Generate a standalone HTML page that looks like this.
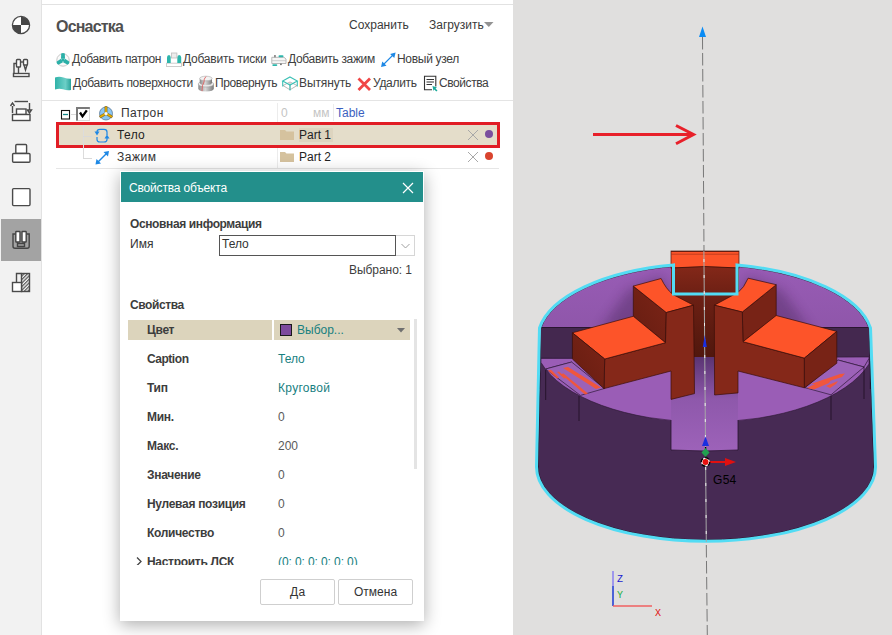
<!DOCTYPE html>
<html><head><meta charset="utf-8">
<style>
html,body{margin:0;padding:0;width:892px;height:635px;overflow:hidden;background:#fff;}
body{position:relative;font-family:"Liberation Sans",sans-serif;color:#333;}
.a{position:absolute;white-space:nowrap;}
.t12{font-size:12px;line-height:14px;}
.t13{font-size:13px;line-height:15px;}
.b{font-weight:bold;}
#side{position:absolute;left:0;top:0;width:41px;height:635px;background:#f2f2f2;border-right:1px solid #e2e2e2;}
#view{position:absolute;left:513px;top:0;width:379px;height:635px;background:#e0dfde;overflow:hidden;}
svg{position:absolute;overflow:visible;}
.tb{color:#404040;}
.lbl{color:#3d3d3d;font-weight:bold;font-size:12px;line-height:14px;position:absolute;white-space:nowrap;}
.val{color:#5a5a5a;font-size:12px;line-height:14px;position:absolute;white-space:nowrap;}
.teal{color:#17807f;}
</style></head><body>

<!-- ===== sidebar ===== -->
<div id="side"></div>
<div class="a" style="left:1px;top:219px;width:40px;height:42px;background:#a3a3a3"></div>
<!-- icon 1 : circle target -->
<svg style="left:0;top:0" width="42" height="300">
 <circle cx="21" cy="25" r="8.6" fill="#fff" stroke="#4a4a4a" stroke-width="1.3"/>
 <path d="M21 25 L21 16.4 A8.6 8.6 0 0 1 29.6 25 Z" fill="#474747"/>
 <path d="M21 25 L21 33.6 A8.6 8.6 0 0 1 12.4 25 Z" fill="#474747"/>
 <!-- icon 2 : machine -->
 <g fill="none" stroke="#4a4a4a" stroke-width="1.4">
  <rect x="13.5" y="73.5" width="15.5" height="3" fill="#fff"/>
  <path d="M14 73.5 V63.5 H16.5"/>
  <path d="M18.5 73.5 V67"/>
  <rect x="16.5" y="59.5" width="4" height="7.5" rx="0.8" fill="#fff"/>
  <rect x="23.5" y="59.5" width="4" height="5.5" rx="0.8" fill="#fff"/>
  <path d="M24 65 L25.5 70 L27 65"/>
  <path d="M20.5 62 H23.5"/>
 </g>
 <!-- icon 3 : arrows/table -->
 <g fill="none" stroke="#4a4a4a" stroke-width="1.4">
  <path d="M14.5 101.5 H28"/>
  <path d="M12.5 113 V104"/><path d="M10.5 106 L12.5 103 L14.5 106" fill="#fff"/>
  <path d="M29.5 103 V111"/><path d="M27.5 110 L29.5 113 L31.5 110 Z" fill="#fff"/>
  <rect x="16.5" y="109" width="9.5" height="5.5" fill="#fff"/>
  <rect x="12.5" y="114.5" width="17.5" height="6" fill="#fff"/>
 </g>
 <!-- icon 4 : stacked boxes -->
 <g fill="#fff" stroke="#4a4a4a" stroke-width="1.4">
  <rect x="15.8" y="144.5" width="10.8" height="9" rx="1"/>
  <rect x="12.6" y="153.5" width="17.4" height="8.8" rx="1"/>
  <rect x="12.6" y="188.6" width="17.4" height="17" rx="1"/>
 </g>
 <!-- icon 5 : vise (selected) -->
 <g fill="none" stroke="#444" stroke-width="1.4">
  <path d="M15.8 234 H13 V246.3 Q13 248.3 15 248.3 H27.2 Q29.2 248.3 29.2 246.3 V234 H26.2"/>
  <rect x="15.8" y="231.5" width="4.2" height="10.5" rx="0.5" fill="#fff"/>
  <rect x="22" y="231.5" width="4.2" height="10.5" rx="0.5" fill="#fff"/>
  <path d="M17.5 242 V247 M24.5 242 V247 M17.5 243.5 H24.5 M17.5 246.5 H24.5"/>
 </g>
 <!-- icon 6 : hatched -->
 <defs><pattern id="hat" width="2.5" height="2.5" patternUnits="userSpaceOnUse" patternTransform="rotate(45)"><rect width="1.2" height="2.5" fill="#555"/></pattern></defs>
 <g stroke="#4a4a4a" stroke-width="1.4">
  <rect x="21.5" y="273.5" width="8" height="18" fill="url(#hat)"/>
  <path d="M16.5 282.5 V273.5 H21.5" fill="none"/>
  <rect x="12.5" y="282.5" width="9" height="9" fill="#fff"/>
 </g>
</svg>

<!-- ===== main panel ===== -->
<div class="a" style="left:42px;top:4px;width:471px;height:1px;background:#e2e2e2"></div>
<div class="a b" style="left:56px;top:18px;font-size:16px;line-height:18px;color:#505050;letter-spacing:-0.8px">Оснастка</div>
<div class="a t12" style="left:349px;top:18px;color:#3a3a3a;letter-spacing:0px">Сохранить</div>
<div class="a t12" style="left:429px;top:18px;color:#3a3a3a;letter-spacing:0px">Загрузить</div>
<svg style="left:0;top:0" width="1" height="1"><path d="M484 22 H493.5 L488.8 27 Z" fill="#939393"/></svg>

<!-- toolbar row 1 -->
<div class="a t12 tb" style="left:72px;top:52px;letter-spacing:-0.38px">Добавить патрон</div>
<div class="a t12 tb" style="left:183px;top:52px;letter-spacing:-0.22px">Добавить тиски</div>
<div class="a t12 tb" style="left:288px;top:52px;letter-spacing:-0.33px">Добавить зажим</div>
<div class="a t12 tb" style="left:397px;top:52px;letter-spacing:-0.3px">Новый узел</div>
<!-- toolbar row 2 -->
<div class="a t12 tb" style="left:73px;top:76px;letter-spacing:-0.33px">Добавить поверхности</div>
<div class="a t12 tb" style="left:215px;top:76px;letter-spacing:-0.38px">Провернуть</div>
<div class="a t12 tb" style="left:299px;top:76px;letter-spacing:-0.1px">Вытянуть</div>
<div class="a t12 tb" style="left:373px;top:76px;letter-spacing:-0.3px">Удалить</div>
<div class="a t12 tb" style="left:439px;top:76px;letter-spacing:-0.43px">Свойства</div>

<svg style="left:0;top:0" width="1" height="1">
 <!-- chuck icon -->
 <g transform="translate(63,60)">
  <circle r="6.2" fill="#fafafa" stroke="#c8c8c8" stroke-width="1"/>
  <path d="M-2 -1.2 L-1.8 -6.5 Q0 -7.5 1.8 -6.5 L2 -1.2 Z" fill="#2bb0a8"/>
  <g transform="rotate(120)"><path d="M-2 -1.2 L-1.8 -6.5 Q0 -7.5 1.8 -6.5 L2 -1.2 Z" fill="#2bb0a8"/></g>
  <g transform="rotate(240)"><path d="M-2 -1.2 L-1.8 -6.5 Q0 -7.5 1.8 -6.5 L2 -1.2 Z" fill="#2bb0a8"/></g>
  <circle r="1.6" fill="#2bb0a8"/>
 </g>
 <!-- vise icon -->
 <g>
  <rect x="166.5" y="63.2" width="15" height="3.3" fill="#fff" stroke="#c8c8c8" stroke-width="0.9"/>
  <path d="M167 63 V57.5 Q167 55 169 55 Q170.7 55 170.7 57.5 V63 Z" fill="#2db5ab"/>
  <path d="M177.3 63 V57.5 Q177.3 55 179.2 55 Q181.2 55 181.2 57.5 V63 Z" fill="#2db5ab"/>
  <rect x="171.4" y="53" width="5.5" height="5" fill="#ececec" stroke="#bdbdbd" stroke-width="0.8"/>
 </g>
 <!-- clamp icon -->
 <g>
  <path d="M271.8 57.3 H284 L286 59 V63.5 H271.8 Z" fill="#f6f6f6" stroke="#b0b0b0" stroke-width="0.9"/>
  <path d="M272 60.7 H286" stroke="#c0c0c0" stroke-width="0.8"/>
  <rect x="274.2" y="55" width="1.5" height="2.3" fill="#777"/>
  <rect x="278.5" y="55.2" width="5" height="2" rx="1" fill="#2db5ab"/>
  <rect x="272.3" y="64.2" width="5" height="1.8" rx="0.9" fill="#2db5ab"/>
  <rect x="280" y="63.5" width="1.8" height="1.6" fill="#777"/>
 </g>
 <!-- new node arrow -->
 <g stroke="#1e88e5" stroke-width="1.1" fill="#1e88e5">
  <path d="M383.5 64.5 L393 55" />
  <path d="M381 67 L382.3 61.5 L386.5 65.7 Z" stroke="none"/>
  <path d="M395.6 52.6 L394.3 58.1 L390.1 53.9 Z" stroke="none"/>
 </g>
 <!-- surface flag -->
 <defs><linearGradient id="gflag" x1="0" x2="1" y1="0" y2="0"><stop offset="0" stop-color="#2fb2a8"/><stop offset="0.65" stop-color="#6ccfc7"/><stop offset="1" stop-color="#2aa39a"/></linearGradient></defs>
 <path d="M55 77.5 Q59 76 63.5 77.5 Q67.5 79 71 78.8 V90 Q67 90.8 63 89.2 Q59 88 55 89.5 Z" fill="url(#gflag)"/>
 <!-- revolve icon -->
 <defs><linearGradient id="gcyl" x1="0" x2="1" y1="0" y2="0"><stop offset="0" stop-color="#8a8a8a"/><stop offset="0.45" stop-color="#d8d8d8"/><stop offset="1" stop-color="#7a7a7a"/></linearGradient></defs>
 <g>
  <path d="M198.3 84 V88.5 Q198.3 91.5 206 91.5 Q213.8 91.5 213.8 88.5 V84 Z" fill="url(#gcyl)"/>
  <ellipse cx="206" cy="84" rx="7.8" ry="3" fill="#e8e8e8" stroke="#999" stroke-width="0.5"/>
  <path d="M199.7 78.5 V82.5 Q199.7 85 206 85 Q212 85 212 82.5 V78.5 Z" fill="url(#gcyl)"/>
  <ellipse cx="205.9" cy="78.5" rx="6.2" ry="2.3" fill="#f2f2f2" stroke="#999" stroke-width="0.5"/>
  <path d="M206 76.5 Q203.5 79 204 82 Q201.8 85 202 91.2" fill="none" stroke="#e05050" stroke-width="0.8"/>
 </g>
 <!-- extrude icon -->
 <g fill="none" stroke="#9a9a9a" stroke-width="0.7">
  <path d="M283 85.5 L290 89.8 L297 85.5 M290 83 V89.8 M283 85.5 L290 82 L297 85.5"/>
 </g>
 <g fill="none" stroke="#3cc0b5" stroke-width="1.1">
  <path d="M290 77 L297.3 81 L290 85 L282.7 81 Z"/>
  <path d="M282.7 81 V86.5 M297.3 81 V86.5 M290 85 V90.5"/>
 </g>
 <!-- delete X -->
 <g stroke="#f04646" stroke-width="2.8">
  <path d="M358.5 78.5 L370 90 M370 78.5 L358.5 90"/>
 </g>
 <!-- properties doc -->
 <g fill="none" stroke="#333" stroke-width="1.1">
  <path d="M432 89.7 H424.5 V76.3 H435.8 V86.5"/>
  <path d="M426.5 79.5 H434 M426.5 82 H434 M426.5 84.5 H432"/>
 </g>
 <path d="M432.5 86 L437 87.5 L435.5 88.5 L437.5 90.5 L436.3 91.5 L434.3 89.5 L433.5 91 Z" fill="#1aaa9a"/>
</svg>

<!-- ===== tree ===== -->
<div class="a" style="left:42px;top:100px;width:471px;height:1px;background:#e4e4e4"></div>
<div class="a" style="left:56px;top:168px;width:443px;height:1px;background:#e6e6e6"></div>
<!-- column separators -->
<div class="a" style="left:277px;top:103px;width:1px;height:65px;background:#ececec"></div>
<div class="a" style="left:333px;top:104px;width:1px;height:17px;background:#ececec"></div>
<!-- selected row -->
<div class="a" style="left:56px;top:122px;width:438px;height:20px;border:3px solid #e11d25;background:#e4ddca"></div>
<div class="a" style="left:299px;top:128px;width:34px;height:14px;background:#ddd4bf"></div>
<!-- tree lines -->
<div class="a" style="left:83px;top:125px;width:1px;height:33px;background:#dcdcdc"></div>
<div class="a" style="left:83px;top:136px;width:9px;height:1px;background:#d9d9d9"></div>
<div class="a" style="left:83px;top:158px;width:9px;height:1px;background:#d9d9d9"></div>
<div class="a" style="left:71px;top:114px;width:5px;height:1px;background:#d9d9d9"></div>

<div class="a t12" style="left:121px;top:106px;color:#333;letter-spacing:0.35px">Патрон</div>
<div class="a t12" style="left:117px;top:128px;color:#222;letter-spacing:0.35px">Тело</div>
<div class="a t12" style="left:117px;top:150px;color:#333;letter-spacing:0.55px">Зажим</div>
<div class="a t12" style="left:281px;top:106px;color:#c4c4c4">0</div>
<div class="a t12" style="left:313px;top:106px;color:#c4c4c4">мм</div>
<div class="a t12" style="left:336px;top:106px;color:#3b5fc0">Table</div>
<div class="a t12" style="left:299px;top:128px;color:#222;letter-spacing:0px">Part 1</div>
<div class="a t12" style="left:299px;top:150px;color:#222;letter-spacing:0px">Part 2</div>

<svg style="left:0;top:0" width="1" height="1">
 <!-- minus box -->
 <rect x="61.5" y="110.5" width="8" height="8.5" fill="#fff" stroke="#111" stroke-width="1.1"/>
 <path d="M63 114.5 H68" stroke="#15888a" stroke-width="1.3"/>
 <!-- checkbox -->
 <rect x="76.5" y="107.5" width="13" height="13" fill="#fff" stroke="#dadada" stroke-width="1"/>
 <path d="M76 108 H89.8 M77 107 V120.6" stroke="#7a7a7a" stroke-width="2"/>
 <path d="M80 112.5 L82.5 116.3 L86.8 110.3" fill="none" stroke="#000" stroke-width="2.3"/>
 <!-- patron icon -->
 <g transform="translate(106,113.5)">
  <circle r="6.5" fill="#8cc6f2" stroke="#4a6a8a" stroke-width="0.7"/>
  <g fill="#f0b400" stroke="#6a5010" stroke-width="0.5">
  <path d="M-1.1 -1 L-1.1 -7 L1.1 -7 L1.1 -1 Z"/>
  <g transform="rotate(120)"><path d="M-1.1 -1 L-1.1 -7 L1.1 -7 L1.1 -1 Z"/></g>
  <g transform="rotate(240)"><path d="M-1.1 -1 L-1.1 -7 L1.1 -7 L1.1 -1 Z"/></g>
  </g>
  <circle r="1.6" fill="#fff"/>
 </g>
 <!-- body icon (rotate arrows) -->
 <g fill="none" stroke="#1e88e5" stroke-width="1.2">
  <path d="M97 134 V132 Q97 129.3 100 129.3 H104 Q107 129.3 107 132 V135"/>
  <path d="M107 137 V139.5 Q107 142 104 142 H100 Q97 142 97 139.5 V137"/>
 </g>
 <path d="M94.5 131.5 H99.5 L97 135.5 Z" fill="#1e88e5"/>
 <path d="M104.5 138.5 H109.5 L107 134.5 Z" fill="#1e88e5"/>
 <!-- clamp arrow icon -->
 <g stroke="#1e88e5" stroke-width="1.5" fill="#1e88e5">
  <path d="M97.5 162.5 L107 153"/>
  <path d="M95.5 164.5 L96.5 159 L101 163.5 Z" stroke="none"/>
  <path d="M109 151 L108 156.5 L103.5 152 Z" stroke="none"/>
 </g>
 <!-- folders -->
 <g fill="#d5c29e">
  <path d="M280 130 H285 L286.5 131.5 H294 V140 H280 Z"/>
  <path d="M280 152 H285 L286.5 153.5 H294 V162 H280 Z"/>
 </g>
 <!-- X marks -->
 <g stroke="#a8a8a8" stroke-width="1">
  <path d="M468 130 L478 140 M478 130 L468 140"/>
  <path d="M468 152 L478 162 M478 152 L468 162"/>
 </g>
 <circle cx="489" cy="134" r="4" fill="#7b4f9e"/>
 <circle cx="489" cy="156" r="4" fill="#d9442e"/>
</svg>

<!-- ===== viewport ===== -->
<div id="view"></div>
<svg style="left:0;top:0" width="892" height="635" viewBox="0 0 892 635">
 <defs>
  <clipPath id="vclip"><rect x="513" y="0" width="379" height="635"/></clipPath>
  <clipPath id="upclip"><path d="M541 328 A166 74.5 0 0 1 869 328 Z"/></clipPath>
  <filter id="blur4" x="-50%" y="-50%" width="200%" height="200%"><feGaussianBlur stdDeviation="6"/></filter>
  <linearGradient id="gup" x1="0" x2="0" y1="0" y2="1">
   <stop offset="0" stop-color="#985cb5"/><stop offset="1" stop-color="#8f56aa"/>
  </linearGradient>
  <linearGradient id="gslot" x1="0" x2="0" y1="0" y2="1">
   <stop offset="0" stop-color="#5a3472"/><stop offset="0.45" stop-color="#8e58ab"/><stop offset="1" stop-color="#9d62b9"/>
  </linearGradient>
  <linearGradient id="gbj" gradientUnits="userSpaceOnUse" x1="0" x2="0" y1="266" y2="357"><stop offset="0" stop-color="#842819"/><stop offset="0.3" stop-color="#6e2014"/><stop offset="1" stop-color="#50170d"/></linearGradient>
  <linearGradient id="gback" x1="0" x2="0" y1="0" y2="1"><stop offset="0" stop-color="#842819"/><stop offset="1" stop-color="#5e1c10"/></linearGradient>
  <linearGradient id="gside" x1="0" x2="1" y1="1" y2="0">
   <stop offset="0" stop-color="#661d11"/><stop offset="1" stop-color="#7c2417"/>
  </linearGradient>
 </defs>
 <g clip-path="url(#vclip)">
 <!-- dashed axis (top) -->
 <path d="M702.5 37 L704 251" stroke="#787878" stroke-width="1" stroke-dasharray="12.5 3.5"/>
 <path d="M699 37 L702.5 26.5 L706 37 Z" fill="#0a8cf5"/>
 <!-- body silhouette -->
 <path d="M541 328 L538 467 A168 73 0 0 0 874 467 L869 328 Z" fill="#472a54" stroke="#1c0c20" stroke-width="1"/>
 <!-- upper face -->
 <path d="M541 328 A166 74.5 0 0 1 869 328 Z" fill="url(#gup)" stroke="#2a1530" stroke-width="0.8"/>
 <g clip-path="url(#upclip)" filter="url(#blur4)" fill="#3a1a48" opacity="0.35">
  <path d="M628 290 L662 276 L672 300 L668 330 L600 330 Z"/>
  <path d="M782 290 L748 276 L738 300 L742 330 L810 330 Z"/>
 </g>
 <!-- walls -->
 <path d="M541 327.5 H869 V357 H541 Z" fill="#44284f"/>
 <path d="M541 327.5 H869" stroke="#2a1530" stroke-width="1"/>
 <!-- floor -->
 <path d="M541 358 L869 357 L869 364 A170.6 81.3 0 0 1 541 362.5 Z" fill="#9a5db6" stroke="#2a1530" stroke-width="0.6"/>
 <!-- floor band lines + streak faces -->
 <path d="M541 358.5 L572 358.5 M545.7 369 L572 362 M838 360 L864 367 L869 358.5" fill="none" stroke="#3a2045" stroke-width="0.8"/>
 <path d="M545.7 369 L571.6 362 L604.3 388.5 L580.4 395.4 Z" fill="#9c62b8" stroke="#2e1838" stroke-width="0.7"/>
 <path d="M838 360 L864 367 L831 394.8 L805 387.7 Z" fill="#9c62b8" stroke="#2e1838" stroke-width="0.7"/>
 <g fill="#ff5528" opacity="0.85">
  <path d="M548 370.5 L551 369.8 L559 377.5 L557 378.5 Z"/>
  <path d="M563 368 L568 367 L601 387.5 L596 389 Z"/>
  <path d="M561 374 L563.5 373.5 L588 393.5 L585 394.5 Z"/>
  <path d="M557 372 L559 371.5 L566 378 L564 378.5 Z"/>
  <path d="M807 388 L823 380 L832 378 L829 383 L814 389.5 Z"/>
  <path d="M811 384 L840 374 L845 373.5 L842 377 L820 384 Z"/>
  <path d="M826 386 L838 381 L836 384 L830 388 Z"/>
 </g>
 <!-- slot floor -->
 <path d="M671 357 H738 V450 Q705 452 671 450 Z" fill="url(#gslot)"/>
 <path d="M671 420 V450 Q705 452 738 450 V420" fill="none" stroke="#2a1530" stroke-width="0.8"/>
 <!-- facet lines on body -->
 <path d="M539.5 363 V389 M545.7 370 V400 M579 396 V421 M831 396 V420 M864 367 V399 M870.3 361 V389" stroke="#1e0e22" stroke-width="0.8"/>
 <!-- back jaw -->
 <rect x="671" y="251" width="68" height="17" fill="#fd5429" stroke="#4a140c" stroke-width="0.7"/>
 <path d="M671 251.5 H739" stroke="#5a1a10" stroke-width="0.9"/><path d="M671 254.2 H739" stroke="#a8331a" stroke-width="0.7"/>
 <path d="M671 268 Q705 265 739 268 V357 H671 Z" fill="url(#gbj)"/>
 <path d="M671 268 Q705 265 739 268" fill="none" stroke="#3a0e08" stroke-width="0.8"/>
 
 <!-- left jaw -->
 <g stroke="#3a0e08" stroke-width="0.7" stroke-linejoin="round">
 <path d="M633.3 286.1 L666.3 312.5 L665.5 342.7 L633.3 316.3 Z" fill="url(#gside)"/>
 <path d="M633.3 286.1 L661.1 278.5 Q666 289 673 294.6 L693.5 305.2 L666.3 312.5 Z" fill="#fd5429"/>
 <path d="M604.7 359 L665.5 342.7 L666.3 312.5 L693.5 305.2 L694.5 393.6 L671 399.4 L671 371 L604 388.6 Z" fill="#852819"/>
 <path d="M572.4 332.8 L633.3 316.3 L665.5 342.7 L604.7 359 Z" fill="#fd5429"/>
 <path d="M572.4 332.8 L604.7 359 L604 388.6 L572.4 359 Z" fill="url(#gside)"/>
 </g>
 <!-- right jaw -->
 <g stroke="#3a0e08" stroke-width="0.7" stroke-linejoin="round">
 <path d="M776.2 284.7 L742.3 312 L743 341.7 L776.2 316 Z" fill="#782316"/>
 <path d="M776.2 284.7 L748.1 278.2 Q744 288 737.9 292.5 L714.3 305.2 L742.3 312 Z" fill="#fd5429"/>
 <path d="M804.4 358.1 L743 341.7 L742.3 312 L714.3 305.2 L714.6 395 L738 392.9 L738 371 L804.4 387.8 Z" fill="#852819"/>
 <path d="M836.8 331.4 L776.2 315.5 L743 341.7 L804.4 358.1 Z" fill="#fd5429"/>
 <path d="M836.8 331.4 L804.4 358.1 L804.4 387.8 L836.8 363.2 Z" fill="#782316"/>
 </g>
 <!-- cyan outline -->
 <path d="M539.5 328 A167.5 76 0 0 1 673.5 265 V294 H737 V265 A167.5 76 0 0 1 870.5 328 L875.5 467 A169.5 74.3 0 0 1 536.5 467 Z" fill="none" stroke="#52dcf4" stroke-width="3"/>
 <!-- axis through body -->
 <path d="M703.9 251 L706.3 542" stroke="#a8a8a8" stroke-width="1"/>
 <path d="M703.9 251 L706.3 542" stroke="#f0f0f0" stroke-width="1" stroke-dasharray="3 13" stroke-dashoffset="-8"/>
 <path d="M706.3 545 L707.3 635" stroke="#787878" stroke-width="1" stroke-dasharray="12.5 3.5"/>
 <!-- triad -->
 <path d="M702.8 347 L704.8 335 L706.8 347 Z" fill="#1a2ee0"/>
 <path d="M705.6 447 V462" stroke="#000" stroke-width="1.3"/>
 <path d="M702 446 L705.5 436.5 L709 446 Z" fill="#1a2ee0"/>
 <path d="M705.5 448 L709.5 452.5 L705.5 457 L701.5 452.5 Z" fill="#22a050"/>
 <path d="M706 462 H727" stroke="#e01010" stroke-width="2"/>
 <path d="M725 458 L736 462 L725 466 Z" fill="#e01010"/>
 <circle cx="705.5" cy="462" r="4.3" fill="#fff" stroke="#000" stroke-width="1.4" stroke-dasharray="4 2.5"/>
 <circle cx="705.5" cy="462" r="3" fill="#e81010"/>
 </g>
 <!-- red annotation arrow -->
 <path d="M593 134.5 H692" stroke="#e8202a" stroke-width="3.2"/><path d="M676 125.5 L693.5 134.5 L676 143.8" fill="none" stroke="#e8202a" stroke-width="3"/>
 <!-- bottom-left triad -->
 <path d="M613 571 V606" stroke="#8a7ff0" stroke-width="1.5"/>
 <path d="M613 586 V606" stroke="#3050d0" stroke-width="1.5"/>
 <path d="M613 606 H652" stroke="#f06060" stroke-width="1.5"/>
</svg>
<div class="a" style="left:713px;top:474px;font-size:12px;line-height:13px;color:#000;font-family:'Liberation Sans',sans-serif;letter-spacing:0.3px">G54</div>
<div class="a" style="left:617px;top:574px;font-size:10px;line-height:11px;color:#1a1ad0;font-family:'Liberation Mono',monospace">Z</div>
<div class="a" style="left:617px;top:590px;font-size:10px;line-height:11px;color:#20b040;font-family:'Liberation Mono',monospace">Y</div>
<div class="a" style="left:655px;top:608px;font-size:10px;line-height:11px;color:#e01010;font-family:'Liberation Mono',monospace">X</div>

<!-- ===== dialog ===== -->
<div class="a" style="left:120px;top:171px;width:304px;height:450px;background:#fff;box-shadow:0 4px 16px rgba(0,0,0,0.32);"></div>
<div class="a" style="left:121px;top:172px;width:302px;height:30px;background:#238f8b"></div>
<div class="a t12" style="left:129px;top:181px;color:#fff;letter-spacing:-0.18px">Свойства объекта</div>
<svg style="left:0;top:0" width="1" height="1"><path d="M403 183 L413 193 M413 183 L403 193" stroke="#fff" stroke-width="1.2"/></svg>

<div class="a b t12" style="left:130px;top:217px;color:#3d3d3d;letter-spacing:-0.38px">Основная информация</div>
<div class="a t12" style="left:130px;top:237px;color:#333">Имя</div>
<div class="a" style="left:219px;top:235px;width:175px;height:19px;border:1px solid #555;background:#fff"></div>
<div class="a" style="left:396px;top:235px;width:18px;height:19px;border:1px solid #d6d6d6;border-left:none;background:#fff"></div>
<svg style="left:0;top:0" width="1" height="1"><path d="M401.5 244 L405.5 248 L409.5 244" fill="none" stroke="#a0a0a0" stroke-width="1"/></svg>
<div class="a t12" style="left:222px;top:237px;color:#333">Тело</div>
<div class="a t12" style="left:349px;top:263px;color:#3d3d3d;letter-spacing:-0.05px">Выбрано: 1</div>

<div class="a b t12" style="left:130px;top:298px;color:#3d3d3d;letter-spacing:-0.4px">Свойства</div>

<!-- properties grid -->
<div class="a" style="left:128px;top:320px;width:144px;height:20px;background:#dcd4bc"></div>
<div class="a" style="left:274px;top:320px;width:136px;height:20px;background:#dcd4bc"></div>
<div class="a" style="left:414px;top:319px;width:3px;height:150px;background:#e4e4e4"></div>
<div class="a" style="left:280px;top:324px;width:10px;height:10px;border:1px solid #1a1a1a;background:#7d4a9c"></div>
<svg style="left:0;top:0" width="1" height="1"><path d="M397 328 H405 L401 332.5 Z" fill="#6f6f6f"/></svg>

<div style="position:absolute;left:120px;top:340px;width:300px;height:225px;overflow:hidden"></div>
<div class="lbl" style="left:147px;top:323px;letter-spacing:-0.3px">Цвет</div>
<div class="a t12 teal" style="left:297px;top:323px">Выбор...</div>
<div class="lbl" style="left:147px;top:352px;letter-spacing:-0.45px">Caption</div>
<div class="a t12 teal" style="left:278px;top:352px">Тело</div>
<div class="lbl" style="left:147px;top:381px;letter-spacing:-0.3px">Тип</div>
<div class="a t12 teal" style="left:278px;top:381px;letter-spacing:0.3px">Круговой</div>
<div class="lbl" style="left:147px;top:410px;letter-spacing:-0.3px">Мин.</div>
<div class="val" style="left:278px;top:410px">0</div>
<div class="lbl" style="left:147px;top:439px;letter-spacing:-0.3px">Макс.</div>
<div class="val" style="left:278px;top:439px">200</div>
<div class="lbl" style="left:147px;top:468px;letter-spacing:-0.3px">Значение</div>
<div class="val" style="left:278px;top:468px">0</div>
<div class="lbl" style="left:147px;top:497px;letter-spacing:-0.3px">Нулевая позиция</div>
<div class="val" style="left:278px;top:497px">0</div>
<div class="lbl" style="left:147px;top:526px;letter-spacing:-0.3px">Количество</div>
<div class="val" style="left:278px;top:526px">0</div>
<div style="position:absolute;left:128px;top:550px;width:290px;height:15px;overflow:hidden">
 <div class="lbl" style="left:19px;top:5px;letter-spacing:-0.3px">Настроить ЛСК</div>
 <div class="a t12 teal" style="left:150px;top:5px;letter-spacing:-0.1px">(0; 0; 0; 0; 0; 0)</div>
 <svg style="left:0;top:0" width="1" height="1"><path d="M9 7.5 L13 11.5 L9 15.5" fill="none" stroke="#444" stroke-width="1.3"/></svg>
</div>

<!-- buttons -->
<div class="a" style="left:260px;top:579px;width:73px;height:24px;border:1px solid #cfcfcf;border-radius:2px;background:#fff"></div>
<div class="a" style="left:338px;top:579px;width:73px;height:24px;border:1px solid #cfcfcf;border-radius:2px;background:#fff"></div>
<div class="a t12" style="left:290px;top:585px;color:#333;letter-spacing:0.4px">Да</div>
<div class="a t12" style="left:354px;top:585px;color:#333">Отмена</div>

</body></html>
